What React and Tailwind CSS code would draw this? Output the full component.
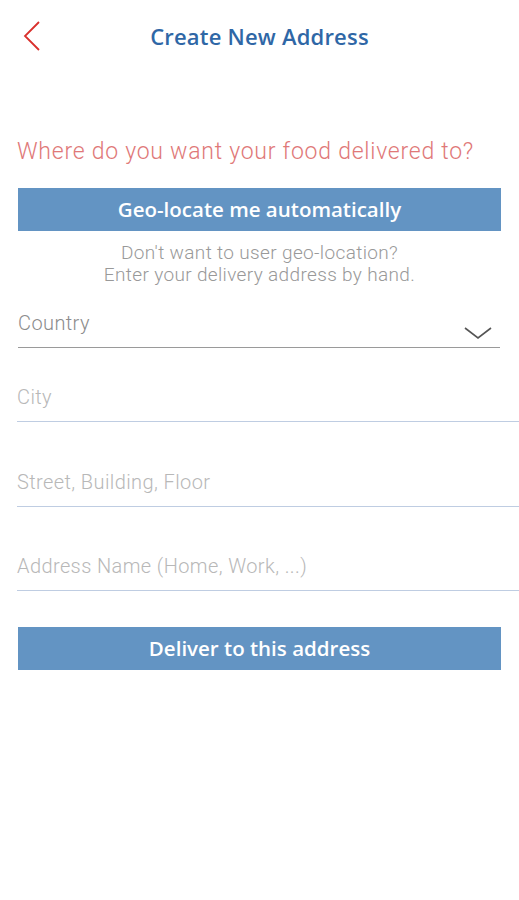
import React from "react";

const fields = [
  { label: "City", gap: "mt-[37px]" },
  { label: "Street, Building, Floor", gap: "mt-[48px]" },
  { label: "Address Name (Home, Work, ...)", gap: "mt-[47px]" },
];

const App = () => {
  return (
    <div className="min-h-[900px] w-[519px] bg-white font-['Roboto',sans-serif]">
      {/* Header */}
      <div className="grid h-[72px] grid-cols-[60px_1fr_60px] items-center">
        <button type="button" className="flex h-full items-center pl-[22px]">
          <svg width="20" height="32" viewBox="0 0 20 32" fill="none">
            <path d="M17 2 L3 16 L17 30" stroke="#d9302c" strokeWidth="1.8" />
          </svg>
        </button>
        <h1 className="text-center font-['Open_Sans',sans-serif] text-[22px] font-semibold leading-none tracking-[0.2px] text-[#2f67a6]">
          Create New Address
        </h1>
        <div />
      </div>

      {/* Question */}
      <p className="mt-[66px] pl-[17px] text-[23px] font-light leading-[28px] tracking-[0.75px] text-[#e07878]">
        Where do you want your food delivered to?
      </p>

      <div className="px-[18px]">
        <button
          type="button"
          className="mt-[22px] flex h-[43px] w-[483px] items-center justify-center bg-[#6394c3] font-['Open_Sans',sans-serif] text-[20.5px] font-semibold text-white"
        >
          Geo-locate me automatically
        </button>
      </div>

      <p className="mt-[11px] text-center text-[19px] font-light leading-[22px] tracking-[0.35px] text-[#999999]">
        Don't want to user geo-location?
        <br />
        Enter your delivery address by hand.
      </p>

      {/* Country select */}
      <div className="mt-[25px] pl-[18px] pr-[19px]">
        <div className="flex items-end justify-between border-b border-[#9a9a9a] pb-[12px]">
          <span className="block text-[20px] font-light leading-[24px] tracking-[0.4px] text-[#8c8c8c]">Country</span>
          <svg width="28" height="14" viewBox="0 0 28 14" fill="none" className="mb-[-5px] mr-[8px]">
            <path d="M1 2 L14 12 L27 2" stroke="#555555" strokeWidth="1.6" />
          </svg>
        </div>
      </div>

      {/* Text fields */}
      {fields.map((f) => (
        <div key={f.label} className={`${f.gap} pl-[17px]`}>
          <div className="border-b border-[#bfcde2] pb-[12px]">
            <span className="block text-[20px] font-light leading-[24px] tracking-[0.4px] text-[#b8b8b8]">{f.label}</span>
          </div>
        </div>
      ))}

      <div className="px-[18px]">
        <button
          type="button"
          className="mt-[36px] flex h-[43px] w-[483px] items-center justify-center bg-[#6394c3] font-['Open_Sans',sans-serif] text-[20.5px] font-semibold text-white"
        >
          Deliver to this address
        </button>
      </div>
    </div>
  );
};

export default App;
